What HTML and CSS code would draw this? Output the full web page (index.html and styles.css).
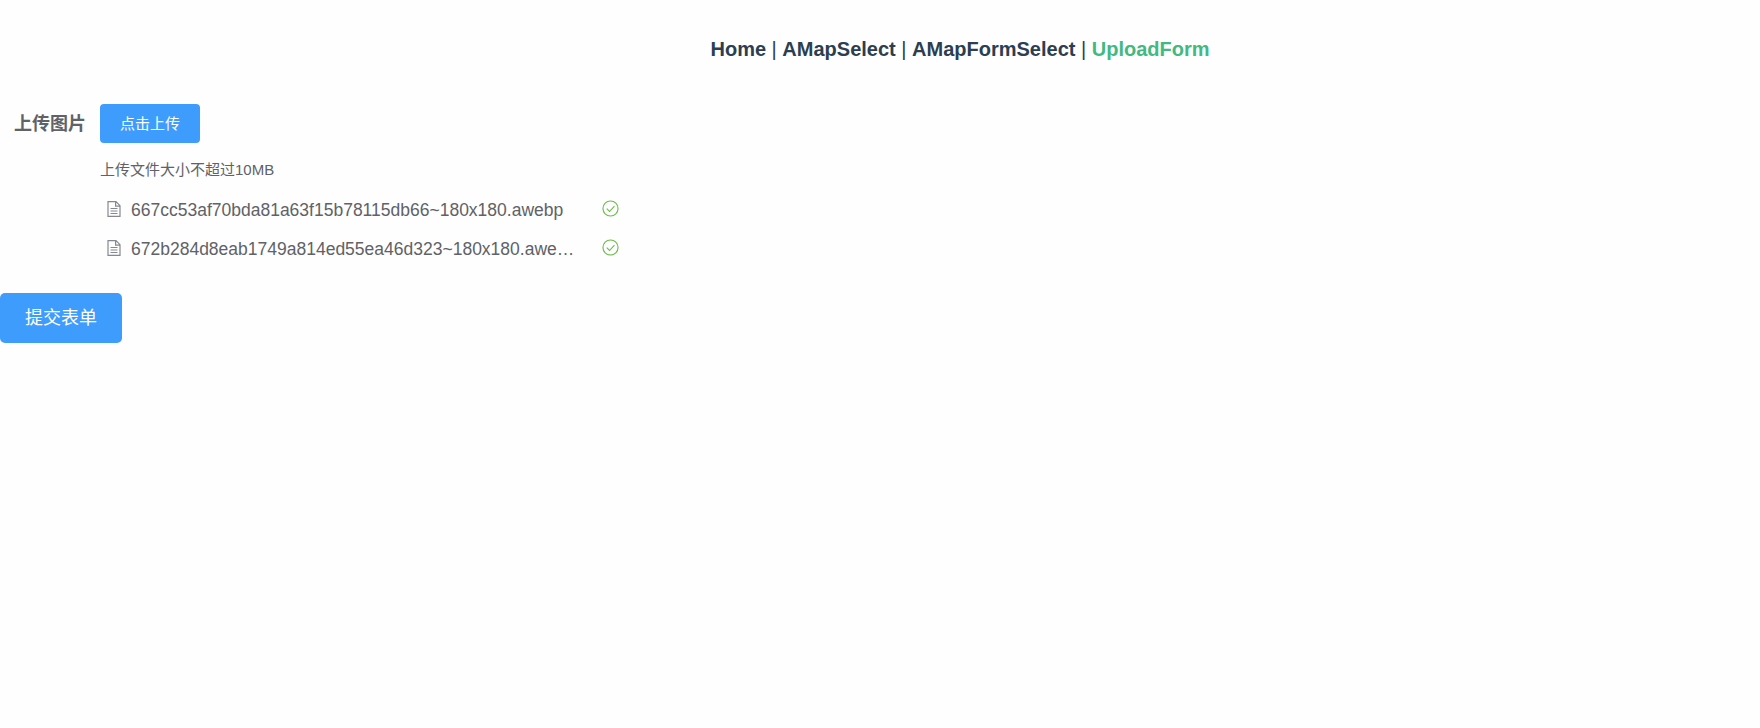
FILE: index.html
```html
<!DOCTYPE html>
<html>
<head>
    <title>UploadForm</title>
    <meta charset="utf-8">
    <link rel="stylesheet" href="styles.css">
</head>
<body>
    <nav class="nav">
        <a href="#" class="nav-link">Home</a> | <a href="#" class="nav-link">AMapSelect</a> | <a href="#" class="nav-link">AMapFormSelect</a> | <a href="#" class="nav-link nav-link-active">UploadForm</a>
    </nav>

    <form class="upload-form">
        <div class="form-item">
            <label class="form-label">上传图片</label>
            <div class="form-content">
                <button type="button" class="btn btn-small">点击上传</button>
                <div class="upload-tip">上传文件大小不超过10MB</div>
                <ul class="upload-list">
                    <li class="upload-row">
                        <svg class="file-icon" viewBox="0 0 14 16"><path d="M1 .7h8l4 4v10.6h-12zM8.6 .7v4.4h4.4M3.5 7.5h7M3.5 10h7M3.5 12.5h7"/></svg>
                        <span class="file-name">667cc53af70bda81a63f15b78115db66~180x180.awebp</span>
                        <svg class="ok-icon" viewBox="0 0 18 18"><circle cx="9" cy="9" r="8"/><path d="M5 9.2l3 3 5.2-5.6"/></svg>
                    </li>
                    <li class="upload-row">
                        <svg class="file-icon" viewBox="0 0 14 16"><path d="M1 .7h8l4 4v10.6h-12zM8.6 .7v4.4h4.4M3.5 7.5h7M3.5 10h7M3.5 12.5h7"/></svg>
                        <span class="file-name">672b284d8eab1749a814ed55ea46d323~180x180.awebp</span>
                        <svg class="ok-icon" viewBox="0 0 18 18"><circle cx="9" cy="9" r="8"/><path d="M5 9.2l3 3 5.2-5.6"/></svg>
                    </li>
                </ul>
            </div>
        </div>
        <button type="button" class="btn btn-submit">提交表单</button>
    </form>
</body>
</html>
```

FILE: styles.css
```css
html, body { margin: 0; padding: 0; background: #fefefe; }
body { font-family: "Liberation Sans", "Noto Sans CJK SC", sans-serif; color: #2c3e50; }

.nav { padding: 38px 0 0 160px; height: 66px; text-align: center; font-size: 20px; line-height: 22px; }
.nav-link { font-weight: bold; color: #2c3e50; text-decoration: none; }
.nav-link-active { color: #42b983; }

.form-item { display: flex; }
.form-label { width: 86px; padding-right: 14px; text-align: right; font-size: 18px; font-weight: bold; color: #606266; line-height: 41px; }
.form-content { width: 520px; }

.btn { display: block; border: 0; background: #3e9cfd; color: #fff; font-family: inherit; cursor: pointer; }
.btn-small { width: 100px; height: 39px; padding: 0 0 2px; font-size: 15px; border-radius: 4px; }
.btn-submit { width: 122px; height: 50px; margin-top: 25px; padding: 0 0 4px; font-size: 18px; border-radius: 5px; }

.upload-tip { margin-top: 16px; font-size: 15px; line-height: 22px; color: #606266; }

.upload-list { list-style: none; margin: 9px 0 0; padding: 0; }
.upload-row { display: flex; align-items: center; height: 39px; padding-left: 7px; color: #606266; font-size: 17.5px; }
.file-icon { width: 14px; height: 16px; flex: none; margin-bottom: 2px; fill: none; stroke: #858891; stroke-width: 1.2; }
.file-name { width: 445px; margin-left: 10px; padding-top: 2px; overflow: hidden; white-space: nowrap; text-overflow: ellipsis; flex: none; }
.ok-icon { width: 17px; height: 17px; flex: none; margin: 0 0 2px 26px; fill: none; stroke: #6dbb4a; stroke-width: 1.2; }
```
